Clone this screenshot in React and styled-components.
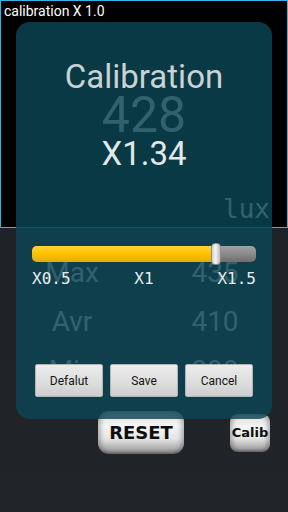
import styled, { createGlobalStyle } from 'styled-components';

const GlobalStyle = createGlobalStyle`
  html, body {
    margin: 0;
    padding: 0;
    background: #1f2226;
  }
  body {
    font-family: Roboto, "Liberation Sans", sans-serif;
  }
`;

const stats = [
  { label: 'Max', value: '435' },
  { label: 'Avr', value: '410' },
  { label: 'Min', value: '398' },
];

const ticks = ['X0.5', 'X1', 'X1.5'];

function App() {
  const ratio = 0.82;

  return (
    <>
      <GlobalStyle />
      <Screen>
        <Meter>
          <AppTitle>calibration X 1.0</AppTitle>
          <Reading>428</Reading>
          <Unit>lux</Unit>
        </Meter>
        <Stats>
          {stats.map((s) => (
            <StatRow key={s.label}>
              <StatCell>{s.label}</StatCell>
              <StatCell>{s.value}</StatCell>
            </StatRow>
          ))}
        </Stats>
        <Actions>
          <GlossButton $big>RESET</GlossButton>
          <GlossButton>Calib</GlossButton>
        </Actions>

        <Dialog>
          <DialogTitle>Calibration</DialogTitle>
          <Factor>X1.34</Factor>
          <Slider>
            <Track>
              <Fill style={{ width: `${ratio * 100}%` }} />
              <Thumb style={{ left: `${ratio * 100}%` }} />
            </Track>
          </Slider>
          <Ticks>
            {ticks.map((t) => (
              <span key={t}>{t}</span>
            ))}
          </Ticks>
          <ButtonBar>
            <DialogButton>Defalut</DialogButton>
            <DialogButton>Save</DialogButton>
            <DialogButton>Cancel</DialogButton>
          </ButtonBar>
        </Dialog>
      </Screen>
    </>
  );
}

const Screen = styled.div`
  position: relative;
  width: 288px;
  height: 512px;
  overflow: hidden;
  background: linear-gradient(to bottom, #1d2024, #212428);
`;

const Meter = styled.section`
  box-sizing: border-box;
  height: 228px;
  display: flex;
  flex-direction: column;
  background: #000;
  border: 1px solid #33b5e5;
  padding: 1px 3px 0;
`;

const AppTitle = styled.div`
  font-size: 14px;
  line-height: 18px;
  color: #fff;
`;

const Reading = styled.div`
  margin-top: 67px;
  font-size: 50px;
  line-height: 56px;
  text-align: center;
  color: #dddddd;
`;

const Unit = styled.div`
  margin-top: 51px;
  align-self: flex-end;
  margin-right: 14px;
  font-family: "DejaVu Sans Mono", monospace;
  font-size: 26px;
  line-height: 30px;
  color: #dddddd;
`;

const Stats = styled.div`
  padding-top: 20px;
`;

const StatRow = styled.div`
  display: grid;
  grid-template-columns: 72px 72px;
  column-gap: 71px;
  padding-left: 36px;
`;

const StatCell = styled.div`
  font-size: 28px;
  line-height: 49px;
  text-align: center;
  color: #dddddd;
`;

const Actions = styled.div`
  display: flex;
  align-items: center;
  margin-top: 16px;
  padding-left: 98px;
  gap: 46px;
`;

const GlossButton = styled.div`
  box-sizing: border-box;
  width: ${(p) => (p.$big ? '86px' : '40px')};
  height: ${(p) => (p.$big ? '43px' : '38px')};
  display: flex;
  align-items: center;
  justify-content: center;
  border-radius: ${(p) => (p.$big ? '11px' : '8px')};
  background: linear-gradient(
    to bottom,
    #d9d9d9 0%,
    #f6f6f6 35%,
    #e4e4e4 65%,
    #a8a8a8 90%,
    #7c7c7c 100%
  );
  box-shadow: inset 3px 0 4px rgba(0, 0, 0, 0.25),
    inset -3px 0 4px rgba(0, 0, 0, 0.25);
  font-family: "DejaVu Sans", sans-serif;
  font-weight: bold;
  font-size: ${(p) => (p.$big ? '18px' : '13px')};
  color: #0e0e0e;
`;

const Dialog = styled.div`
  position: absolute;
  top: 22px;
  left: 16px;
  box-sizing: border-box;
  width: 256px;
  height: 397px;
  padding: 37px 16px 0;
  display: flex;
  flex-direction: column;
  border-radius: 14px;
  background: rgba(12, 70, 85, 0.82);
`;

const DialogTitle = styled.div`
  font-size: 33px;
  line-height: 36px;
  text-align: center;
  color: #c9d2d4;
`;

const Factor = styled.div`
  margin-top: 41px;
  font-size: 33px;
  line-height: 36px;
  text-align: center;
  color: #e2e8e8;
`;

const Slider = styled.div`
  margin-top: 71px;
  height: 22px;
  display: flex;
  align-items: center;
`;

const Track = styled.div`
  position: relative;
  width: 100%;
  height: 16px;
  border-radius: 5px;
  background: linear-gradient(to bottom, #a2a2a2, #8a8a8a 50%, #6e6e6e);
`;

const Fill = styled.div`
  height: 100%;
  border-radius: 5px 0 0 5px;
  background: linear-gradient(to bottom, #ffd43a, #ffc400 45%, #eaa900);
`;

const Thumb = styled.div`
  position: absolute;
  top: -3px;
  width: 10px;
  height: 22px;
  margin-left: -5px;
  box-sizing: border-box;
  border-radius: 4px;
  border: 1px solid #8c8c8c;
  background: linear-gradient(to right, #cfcfcf, #f4f4f4 45%, #bdbdbd);
`;

const Ticks = styled.div`
  margin-top: 6px;
  display: flex;
  justify-content: space-between;
  font-family: "DejaVu Sans Mono", monospace;
  font-size: 16px;
  line-height: 16px;
  color: #e8eeee;
`;

const ButtonBar = styled.div`
  margin-top: 77px;
  padding: 0 3px;
  display: grid;
  grid-template-columns: repeat(3, 1fr);
  gap: 7px;
`;

const DialogButton = styled.div`
  box-sizing: border-box;
  height: 33px;
  display: flex;
  align-items: center;
  justify-content: center;
  border: 1px solid #b4b4b4;
  border-radius: 2px;
  background: linear-gradient(to bottom, #ececec, #dcdcdc 60%, #cdcdcd);
  font-size: 12px;
  color: #151515;
`;

export default App;
